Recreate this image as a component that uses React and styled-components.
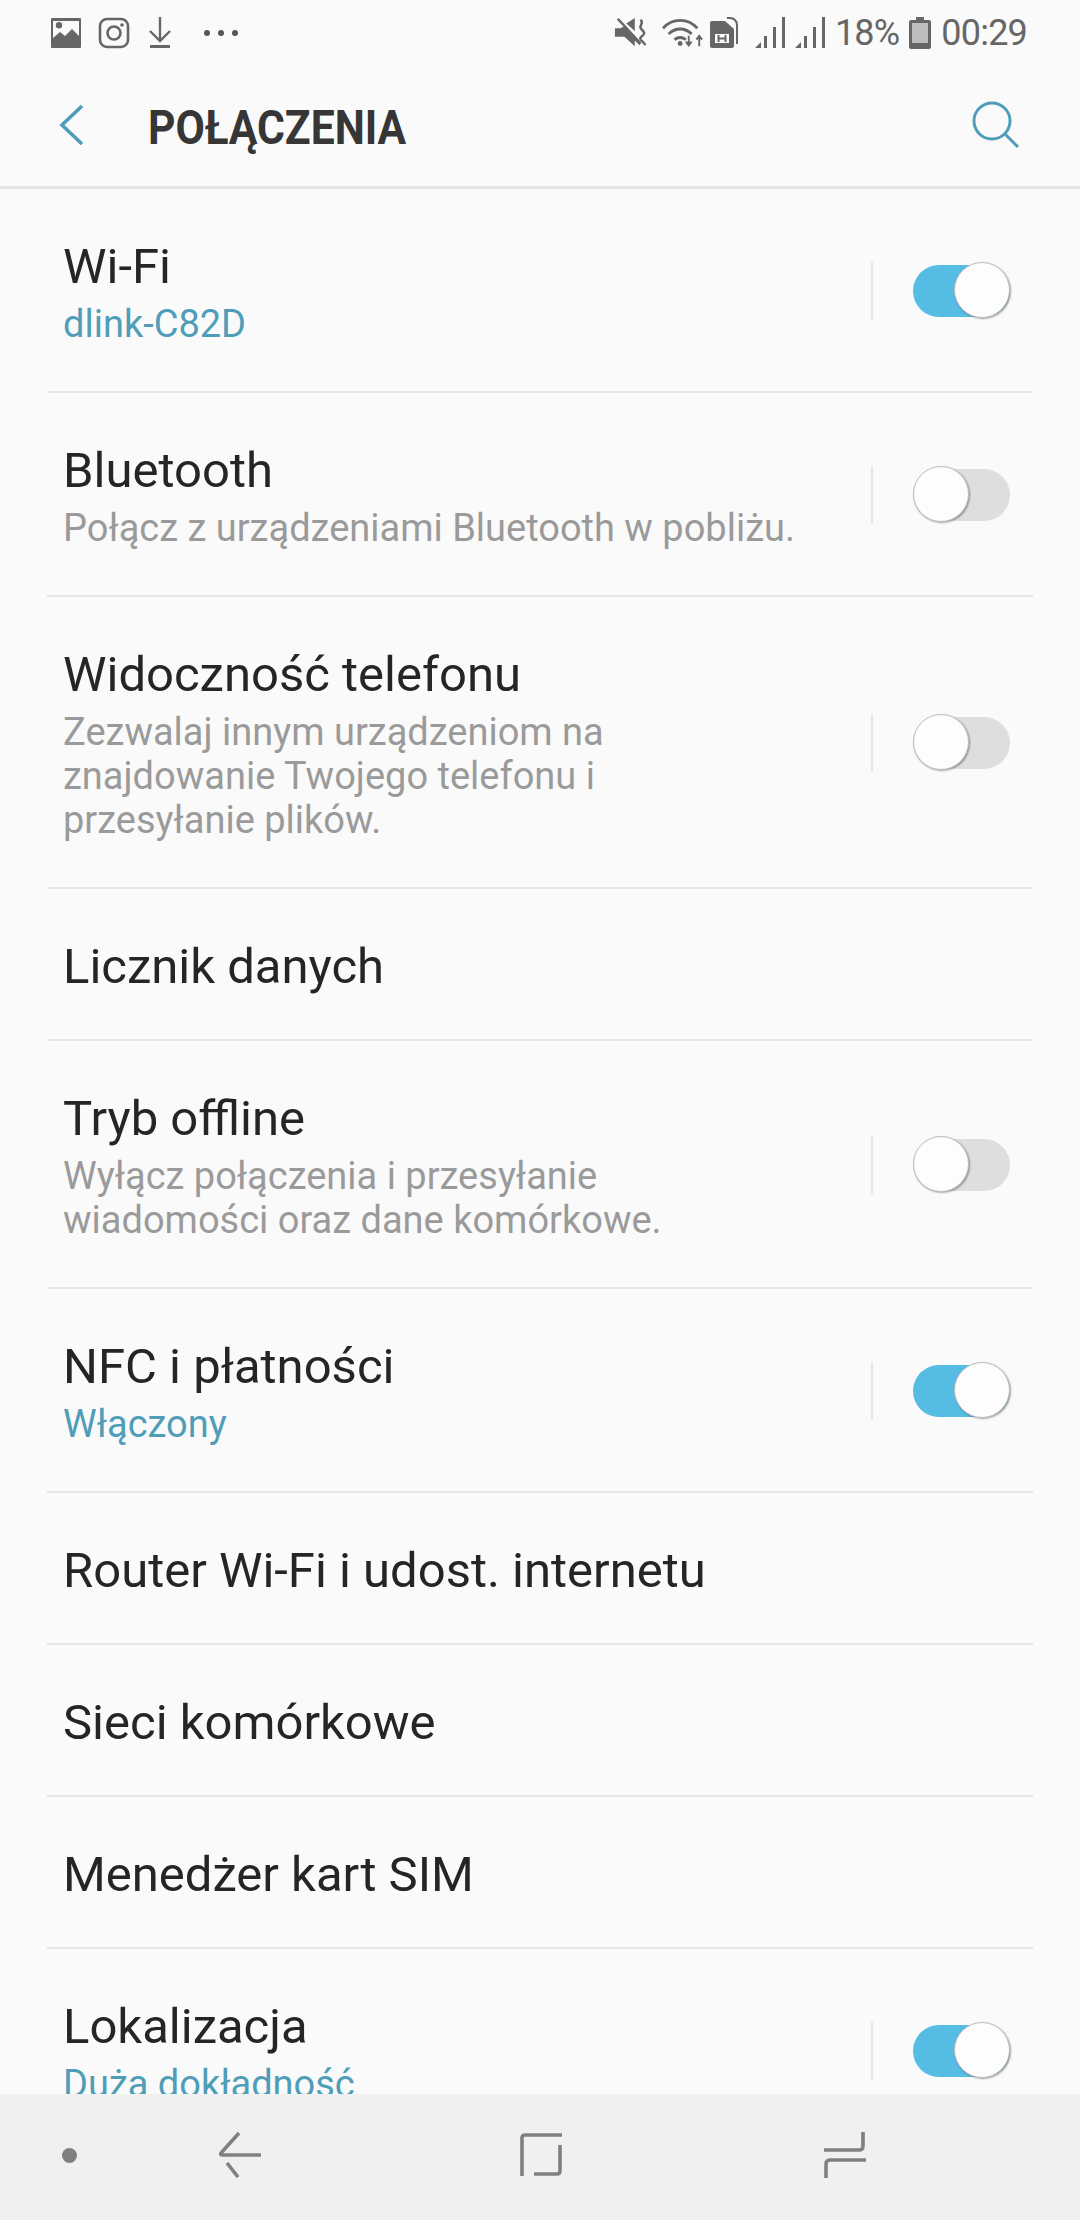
import React from 'react';
import styled, { createGlobalStyle } from 'styled-components';

const GlobalStyle = createGlobalStyle`
  html, body {
    margin: 0;
    padding: 0;
    background: #fafafa;
  }
  body {
    font-family: Roboto, "Noto Sans", sans-serif;
  }
`;

const rows = [
  { title: 'Wi-Fi', sub: 'dlink-C82D', accent: true, toggle: 'on' },
  { title: 'Bluetooth', sub: ['Połącz z urządzeniami Bluetooth w pobliżu.'], toggle: 'off' },
  {
    title: 'Widoczność telefonu',
    sub: ['Zezwalaj innym urządzeniom na', 'znajdowanie Twojego telefonu i', 'przesyłanie plików.'],
    toggle: 'off',
  },
  { title: 'Licznik danych' },
  {
    title: 'Tryb offline',
    sub: ['Wyłącz połączenia i przesyłanie', 'wiadomości oraz dane komórkowe.'],
    toggle: 'off',
  },
  { title: 'NFC i płatności', sub: 'Włączony', accent: true, toggle: 'on' },
  { title: 'Router Wi-Fi i udost. internetu' },
  { title: 'Sieci komórkowe' },
  { title: 'Menedżer kart SIM' },
  { title: 'Lokalizacja', sub: 'Duża dokładność', accent: true, toggle: 'on' },
];

const App = () => {
  return (
    <Page>
      <GlobalStyle />
      <StatusBar>
        <StatusGroup>
          <Glyph width="32" height="32" viewBox="0 0 32 32">
            <path fill="#666" fillRule="evenodd" d="M2 1h28a1 1 0 0 1 1 1v28a1 1 0 0 1-1 1H2a1 1 0 0 1-1-1V2a1 1 0 0 1 1-1zm1 3v17l7-6 5 4 7-7 7 7V4zM9 5a3.2 3.2 0 1 1 0 6.400a3.2 3.2 0 0 1 0-6.400z" />
          </Glyph>
          <Glyph $gap={16} width="32" height="32" viewBox="0 0 32 32">
            <rect x="2" y="2" width="28" height="28" rx="7" fill="none" stroke="#666" strokeWidth="2.600" />
            <circle cx="16" cy="16" r="6.500" fill="none" stroke="#666" strokeWidth="2.600" />
            <circle cx="24" cy="8" r="1.800" fill="#666" />
          </Glyph>
          <Glyph $gap={18} width="24" height="32" viewBox="0 0 24 32">
            <path d="M12 0v24M2 14l10 10 10-10" fill="none" stroke="#666" strokeWidth="2.400" />
            <path d="M2 29.500h20" fill="none" stroke="#666" strokeWidth="3" />
          </Glyph>
          <Dots>
            <Dot />
            <Dot />
            <Dot />
          </Dots>
        </StatusGroup>
        <StatusGroup>
          <Glyph width="34" height="32" viewBox="0 0 36 32">
            <path fill="#666" d="M1 11h6l3-2-7-7 2-2 24 26-2 3-5-5v6L11 20H1zM13 6l9-6v14z" />
            <path d="M28 2c5 4-3 6 1 10s4 5 0 8 3 5 4 9" fill="none" stroke="#666" strokeWidth="2.600" />
          </Glyph>
          <Glyph $gap={14} width="42" height="32" viewBox="0 0 44 32">
            <path d="M1 11c10-11 26-11 36 0M7 17c7-7 17-7 24 0M13 23c4-3 8-3 12 0" fill="none" stroke="#666" strokeWidth="3" />
            <circle cx="19" cy="27" r="2.500" fill="#666" />
            <path d="M28 19v9M25 25l3 4 3-4M39 30v-10M36 23l3-4 3 4" fill="none" stroke="#666" strokeWidth="2" />
          </Glyph>
          <Glyph $gap={5} width="30" height="32" viewBox="0 0 30 32">
            <path fill="#666" fillRule="evenodd" d="M3 4h13l9 8v17a2 2 0 0 1-2 2H3a2 2 0 0 1-2-2V6a2 2 0 0 1 2-2zm3 13v9h14v-9z" />
            <path d="M18 1h3c4 0 7 3 7 7v19" fill="none" stroke="#666" strokeWidth="2" />
            <path d="M9.500 18v7M16.500 18v7M9.500 21.500h7" fill="none" stroke="#666" strokeWidth="2" />
          </Glyph>
          <Glyph $gap={15} width="32" height="32" viewBox="0 0 32 32">
            <path fill="#666" d="M1 31l6-6v6zM10 31V19h3v12zM19 31V10h3v21zM28 31V0h3v31z" />
          </Glyph>
          <Glyph $gap={8} width="32" height="32" viewBox="0 0 32 32">
            <path fill="#666" d="M1 31l6-6v6zM10 31V19h3v12zM19 31V10h3v21zM28 31V0h3v31z" />
          </Glyph>
          <StatusText $gap={9}>18%</StatusText>
          <Glyph $gap={10} width="22" height="32" viewBox="0 0 22 32">
            <path fill="#666" d="M7 0h8v3h5a2 2 0 0 1 2 2v25a2 2 0 0 1-2 2H2a2 2 0 0 1-2-2V5a2 2 0 0 1 2-2h5z" />
            <rect x="3" y="6" width="16" height="20" fill="#bdbdbd" />
          </Glyph>
          <StatusText $gap={10}>00:29</StatusText>
        </StatusGroup>
      </StatusBar>

      <Header>
        <HeaderLeft>
          <svg width="26" height="42" viewBox="0 0 26 42">
            <path d="M23 2L3 21l20 19" fill="none" stroke="#4f9db8" strokeWidth="3.600" />
          </svg>
          <Title>POŁĄCZENIA</Title>
        </HeaderLeft>
        <svg width="48" height="48" viewBox="0 0 48 48">
          <circle cx="20" cy="20" r="18" fill="none" stroke="#4f9db8" strokeWidth="3" />
          <path d="M33 33l13 13" fill="none" stroke="#4f9db8" strokeWidth="3" />
        </svg>
      </Header>

      <List>
        {rows.map((row) => (
          <Row key={row.title}>
            <RowText>
              <RowTitle>{row.title}</RowTitle>
              {row.sub && (
                <RowSub $accent={row.accent}>
                  {Array.isArray(row.sub) ? row.sub.map((line) => <div key={line}>{line}</div>) : row.sub}
                </RowSub>
              )}
            </RowText>
            {row.toggle && (
              <ToggleArea>
                <Separator />
                <Track $on={row.toggle === 'on'}>
                  <Thumb $on={row.toggle === 'on'} />
                </Track>
              </ToggleArea>
            )}
          </Row>
        ))}
      </List>

      <NavBar>
        <NavDot />
        <NavSlot $gap={142}>
          <svg width="42" height="46" viewBox="0 0 42 46">
            <path d="M20 1L2 21q-1 2 1 2h39M8 31l11 14" fill="none" stroke="#808080" strokeWidth="3.600" />
          </svg>
        </NavSlot>
        <NavSlot $gap={259}>
          <svg width="42" height="44" viewBox="0 0 42 44">
            <path d="M42 2H5Q2 2 2 5v38M40 12v26q0 3-3 3H14" fill="none" stroke="#808080" strokeWidth="3.600" />
          </svg>
        </NavSlot>
        <NavSlot $gap={262}>
          <svg width="42" height="46" viewBox="0 0 42 46">
            <path d="M39 0v14q0 4-4 4H0M42 28H6q-4 0-4 4v14" fill="none" stroke="#808080" strokeWidth="3.600" />
          </svg>
        </NavSlot>
      </NavBar>
    </Page>
  );
};

const Page = styled.div`
  width: 1080px;
  height: 2220px;
  display: flex;
  flex-direction: column;
  overflow: hidden;
  background: #fafafa;
`;

const StatusBar = styled.div`
  height: 64px;
  box-sizing: border-box;
  padding: 2px 53px 0 50px;
  display: flex;
  align-items: center;
  justify-content: space-between;
  flex-shrink: 0;
`;

const StatusGroup = styled.div`
  display: flex;
  align-items: center;
`;

const Glyph = styled.svg`
  margin-left: ${(props) => props.$gap || 0}px;
`;

const StatusText = styled.span`
  margin-left: ${(props) => props.$gap}px;
  font-size: 36px;
  line-height: 40px;
  letter-spacing: -0.8px;
  color: #666;
`;

const Dots = styled.div`
  display: flex;
  gap: 8px;
  margin-left: 32px;
`;

const Dot = styled.span`
  width: 6px;
  height: 6px;
  border-radius: 50%;
  background: #555;
`;

const Header = styled.div`
  height: 125px;
  box-sizing: border-box;
  padding: 0 60px 0 59px;
  display: flex;
  align-items: center;
  justify-content: space-between;
  border-bottom: 3px solid #e6e6e6;
  flex-shrink: 0;
`;

const HeaderLeft = styled.div`
  display: flex;
  align-items: center;
`;

const Title = styled.h1`
  margin: 5px 0 0 63px;
  font-size: 49px;
  font-weight: 700;
  color: #363636;
  transform: scaleX(0.87);
  transform-origin: left center;
`;

const List = styled.div`
  flex: 1;
  min-height: 0;
  overflow: hidden;
  padding: 0 47px;
`;

const Row = styled.div`
  padding: 49px 16px 43px;
  display: flex;
  align-items: center;
  justify-content: space-between;
  border-bottom: 2px solid #e6e6e6;
`;

const RowText = styled.div`
  min-width: 0;
`;

const RowTitle = styled.div`
  font-size: 49px;
  line-height: 58px;
  color: #252525;
`;

const RowSub = styled.div`
  margin: 6px 0 2px;
  font-size: 38px;
  line-height: 44px;
  color: ${(props) => (props.$accent ? '#4f9db8' : '#9a9a9a')};
`;

const ToggleArea = styled.div`
  display: flex;
  align-items: center;
  gap: 40px;
  margin: -4px 7px 0 0;
`;

const Separator = styled.div`
  width: 2px;
  height: 58px;
  background: #e6e6e6;
`;

const Track = styled.div`
  position: relative;
  width: 97px;
  height: 52px;
  border-radius: 26px;
  background: ${(props) => (props.$on ? '#55bce4' : '#dedede')};
`;

const Thumb = styled.div`
  position: absolute;
  top: -3px;
  ${(props) => (props.$on ? 'right: 0;' : 'left: 0;')}
  width: 56px;
  height: 56px;
  box-sizing: border-box;
  border-radius: 50%;
  background: #fdfdfd;
  border: 1px solid #bdbdbd;
  box-shadow: 1px 1px 2px rgba(0, 0, 0, 0.35);
`;

const NavBar = styled.div`
  height: 126px;
  flex-shrink: 0;
  padding: 0 0 4px 62px;
  box-sizing: border-box;
  display: flex;
  align-items: center;
  background: #f0f0f0;
`;

const NavDot = styled.span`
  width: 15px;
  height: 15px;
  border-radius: 50%;
  background: #808080;
`;

const NavSlot = styled.div`
  display: flex;
  margin-left: ${(props) => props.$gap}px;
`;

export default App;
